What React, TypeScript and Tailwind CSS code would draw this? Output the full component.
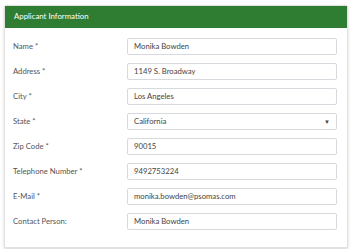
const fields: { label: string; value: string; select?: boolean }[] = [
  { label: "Name *", value: "Monika Bowden" },
  { label: "Address *", value: "1149 S. Broadway" },
  { label: "City *", value: "Los Angeles" },
  { label: "State *", value: "California", select: true },
  { label: "Zip Code *", value: "90015" },
  { label: "Telephone Number *", value: "9492753224" },
  { label: "E-Mail *", value: "monika.bowden@psomas.com" },
  { label: "Contact Person:", value: "Monika Bowden" },
]

export default function App() {
  return (
    <div
      className="min-h-[249px] w-[354px] bg-white pl-[4px] pr-[6px] pt-[5px]"
      style={{ fontFamily: 'Lato, "Open Sans", sans-serif' }}
    >
      <div className="rounded-[2px] border border-[#e2e2e2] bg-white shadow-[0_1px_3px_rgba(0,0,0,0.18)]">
        <div className="flex h-[22px] items-center bg-[#2e7d32] pl-[9px] text-[7.8px] text-white">
          Applicant Information
        </div>
        <div className="flex flex-col gap-[8px] pb-[17px] pl-[8px] pr-[10px] pt-[10px]">
          {fields.map((f) => (
            <div key={f.label} className="flex items-center">
              <div className="w-[114px] shrink-0 text-[7.7px] text-[#555]">{f.label}</div>
              <div className="flex h-[17px] flex-1 items-center justify-between rounded-[2px] border border-[#d6d9de] px-[6px] text-[7.7px] text-[#444]">
                <span>{f.value}</span>
                {f.select && <span className="text-[6px] text-[#444]">▼</span>}
              </div>
            </div>
          ))}
        </div>
      </div>
    </div>
  )
}
